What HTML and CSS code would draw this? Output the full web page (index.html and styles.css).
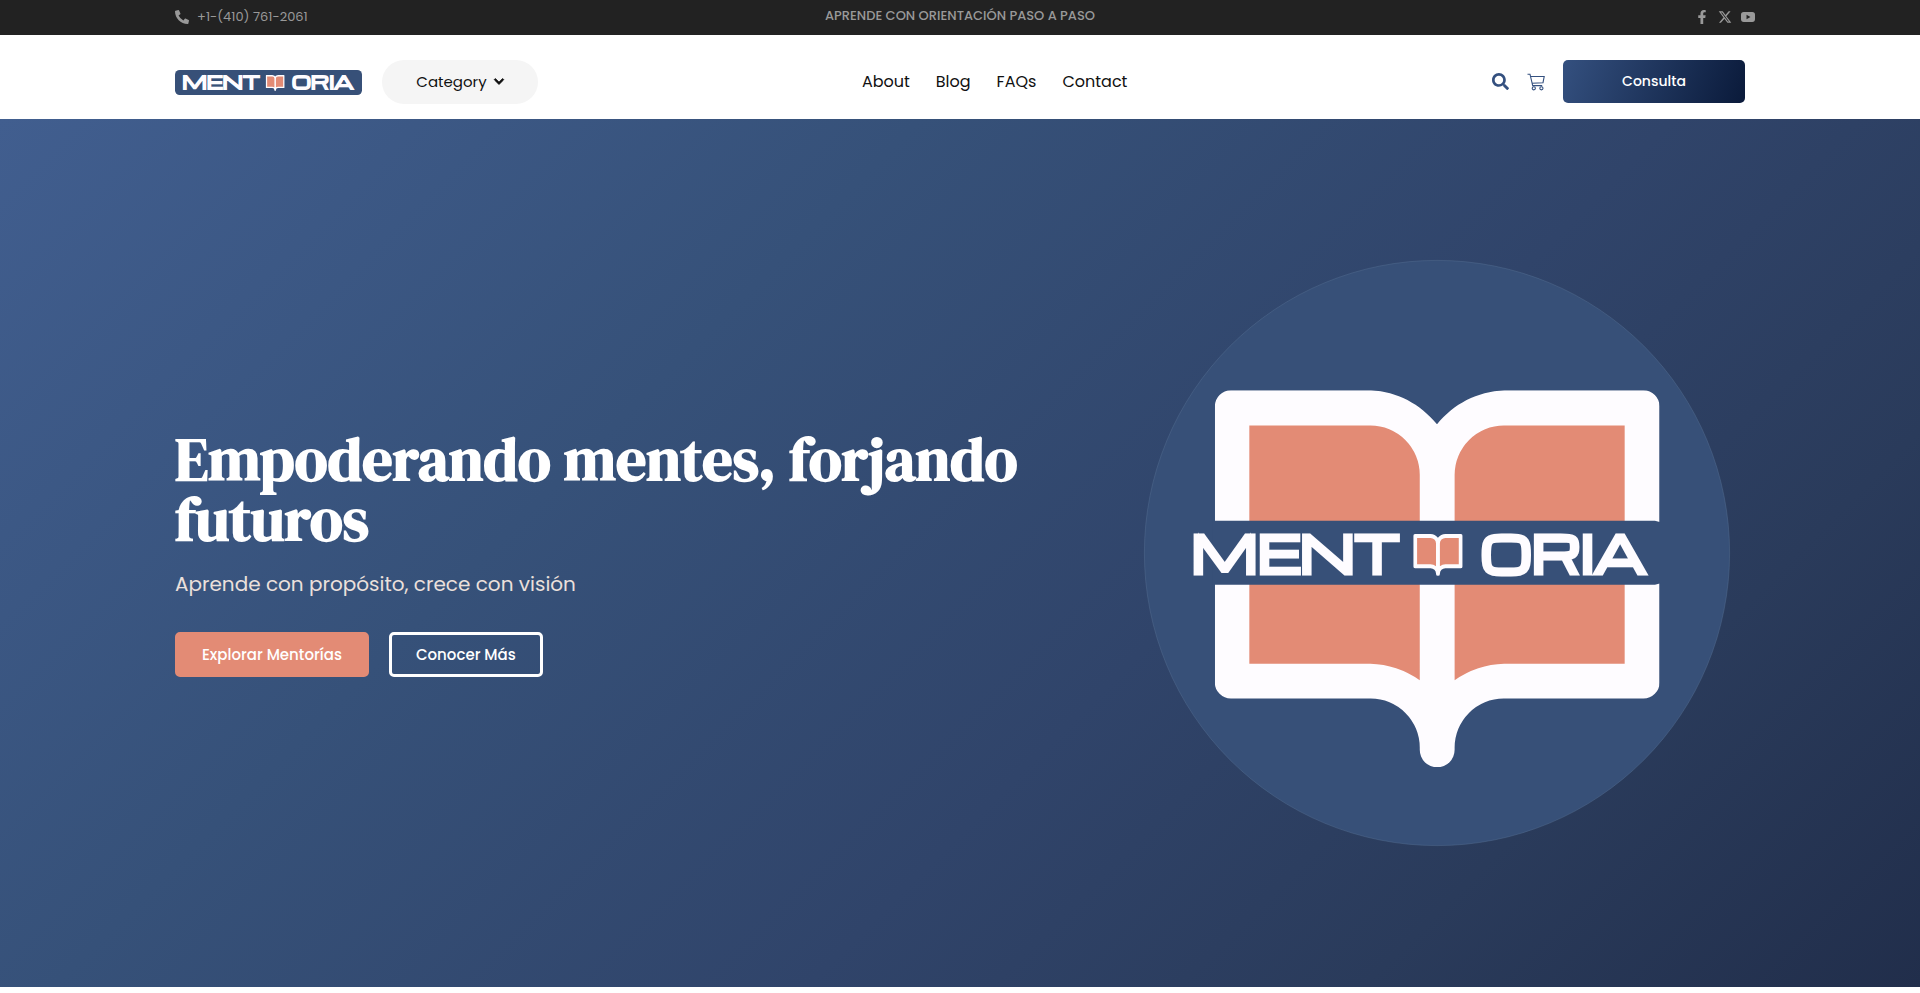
FILE: index.html
```html
<!DOCTYPE html>
<html lang="es">
	<head>
		<meta charset="utf-8">
		<meta name="viewport" content="width=device-width, initial-scale=1">
		<title>Mentooria</title>
		<link rel="stylesheet" href="styles.css">
	</head>
	<body>

		<!-- shared book drawing -->
		<svg class="defs" width="0" height="0" aria-hidden="true">
			<symbol id="book" viewBox="196 367 1161 984">
				<path fill="#fefcff" d="M238 367H604C672 371 732 402 776 456C820 402 880 371 952 367H1315A42 42 0 0 1 1357 409V1130A42 42 0 0 1 1315 1172H950A128 128 0 0 0 822 1300V1306A45 45 0 0 1 731 1306V1300A128 128 0 0 0 603 1172H238A42 42 0 0 1 196 1130V409A42 42 0 0 1 238 367Z"/>
				<path fill="#e38b75" d="M286 459H602A129 129 0 0 1 731 588V1124Q672 1083 602 1081H286ZM1266 459H951A129 129 0 0 0 822 588V1124Q881 1083 951 1081H1266Z"/>
			</symbol>
		</svg>

		<div class="topbar">
			<div class="container topbar-inner">
				<a class="phone" href="tel:+14107612061">
					<svg viewBox="0 0 512 512" width="14" height="14" aria-hidden="true"><path d="M497.39 361.8l-112-48a24 24 0 0 0-28 6.9l-49.6 60.6A370.66 370.66 0 0 1 130.6 204.11l60.6-49.6a23.94 23.94 0 0 0 6.9-28l-48-112A24.16 24.16 0 0 0 122.6.61l-104 24A24 24 0 0 0 0 48c0 256.5 207.9 464 464 464a24 24 0 0 0 23.4-18.6l24-104a24.29 24.29 0 0 0-14.01-27.6z"/></svg>
					<span>+1-(410) 761-2061</span>
				</a>
				<p class="slogan">APRENDE CON ORIENTACIÓN PASO A PASO</p>
				<div class="social">
					<a href="#" aria-label="Facebook"><svg viewBox="0 0 320 512" width="14" height="14"><path d="M279.14 288l14.22-92.66h-88.91v-60.13c0-25.35 12.42-50.06 52.24-50.06h40.42V6.26S260.43 0 225.36 0c-73.22 0-121.08 44.38-121.08 124.72v70.62H22.89V288h81.39v224h100.17V288z"/></svg></a>
					<a href="#" aria-label="X"><svg viewBox="0 0 512 512" width="14" height="14"><path d="M389.2 48h70.6L305.6 224.2 487 464H345L233.7 318.6 106.5 464H35.8L200.7 275.5 26.8 48H172.4L272.9 180.9 389.2 48zM364.4 421.8h39.1L151.1 88h-42L364.4 421.8z"/></svg></a>
					<a href="#" aria-label="YouTube"><svg viewBox="0 0 512 512" width="14" height="14"><path fill-rule="evenodd" d="M100 76H412Q512 76 512 170V342Q512 436 412 436H100Q0 436 0 342V170Q0 76 100 76ZM202 174V338L346 256Z"/></svg></a>
				</div>
			</div>
		</div>

		<header class="header">
			<div class="container header-inner">
				<div class="header-left">
					<a class="logo" href="#" aria-label="Mentooria">
						<svg viewBox="0 0 561 75" width="187" height="25">
							<rect width="561" height="75" rx="14" fill="#375078"/>
							<text class="logo-text" x="138" y="58" font-size="54" stroke-width="4">MENT</text>
							<use href="#book" x="272" y="14" width="57" height="50"/>
							<text class="logo-text" x="443" y="58" font-size="54" stroke-width="4">ORIA</text>
						</svg>
					</a>
					<button class="category" type="button">
						Category
						<svg viewBox="0 0 448 512" width="10" height="11" aria-hidden="true"><path d="M207 381L13 187a24 24 0 0 1 0-34l23-23a24 24 0 0 1 34 0l154 154 154-154a24 24 0 0 1 34 0l23 23a24 24 0 0 1 0 34L241 381a24 24 0 0 1-34 0z" stroke="#111" stroke-width="34"/></svg>
					</button>
				</div>
				<div class="header-right">
					<nav class="menu">
						<a href="#">About</a>
						<a href="#">Blog</a>
						<a href="#">FAQs</a>
						<a href="#">Contact</a>
					</nav>
					<div class="actions">
						<a class="icon" href="#" aria-label="Buscar"><svg viewBox="0 0 512 512" width="17" height="17"><path d="M505 442.7L405.3 343c-4.5-4.5-10.6-7-17-7H372c27.6-35.3 44-79.7 44-128C416 93.1 322.9 0 208 0S0 93.1 0 208s93.1 208 208 208c48.3 0 92.7-16.4 128-44v16.3c0 6.4 2.5 12.5 7 17l99.7 99.7c9.4 9.4 24.6 9.4 33.9 0l28.3-28.3c9.4-9.4 9.4-24.6.1-34zM208 336c-70.7 0-128-57.2-128-128 0-70.7 57.2-128 128-128 70.7 0 128 57.2 128 128 0 70.7-57.2 128-128 128z"/></svg></a>
						<a class="icon cart" href="#" aria-label="Carrito"><svg viewBox="0 0 18 18" width="18" height="18"><path d="M0.5 1.2H3L5.7 12.6H15.2M3.6 3.5H17.2L16 9.7L5 10.3"/><circle cx="6.8" cy="15.3" r="1.6"/><circle cx="14.4" cy="15.3" r="1.6"/></svg></a>
						<a class="consulta" href="#">Consulta</a>
					</div>
				</div>
			</div>
		</header>

		<main class="hero">
			<div class="container hero-inner">
				<div class="hero-text">
					<h1>Empoderando mentes, forjando futuros</h1>
					<p>Aprende con propósito, crece con visión</p>
					<div class="buttons">
						<a class="btn btn-fill" href="#">Explorar Mentorías</a>
						<a class="btn btn-line" href="#">Conocer Más</a>
					</div>
				</div>
				<div class="hero-image">
					<svg viewBox="11 27 1530 1530" role="img" aria-label="Mentooria">
						<circle cx="776" cy="792" r="764" fill="#375078" stroke="#5d7598" stroke-width="1"/>
						<use href="#book" x="196" y="367" width="1161" height="984"/>
						<path fill="#375078" d="M190 708H1345L1360 712V871L1345 875H190Z"/>
						<text class="logo-text" x="407" y="844" font-size="126" stroke-width="9">MENT</text>
						<use href="#book" x="714" y="742" width="129" height="110"/>
						<text class="logo-text" x="1106" y="844" font-size="126" stroke-width="9">ORIA</text>
					</svg>
				</div>
			</div>
		</main>

	</body>
</html>
```
FILE: styles.css
```css
* {
	margin: 0;
	padding: 0;
	box-sizing: border-box;
}

body {
	background-color: #fff;
	font-family: Poppins, Inter, sans-serif;
	font-size: 16px;
	color: #111;
}

a {
	color: inherit;
	text-decoration: none;
}

svg {
	display: block;
	fill: currentColor;
	overflow: visible;
}

.defs {
	position: absolute;
}

.container {
	width: 82%;
	max-width: 1570px;
	margin: 0 auto;
}

/* top bar */
.topbar {
	background-color: #222;
	color: #999;
	font-size: 13px;
}

.topbar-inner {
	display: grid;
	grid-template-columns: 1fr auto 1fr;
	align-items: center;
	height: 35px;
	padding-bottom: 1px;
}

.phone {
	display: flex;
	align-items: center;
	gap: 8px;
}

.slogan {
	font-weight: 500;
	line-height: 20px;
	padding-bottom: 2px;
}

.social {
	display: flex;
	justify-content: flex-end;
	gap: 9px;
	margin-right: -10px;
}

/* header */
.header-inner {
	display: grid;
	grid-template-columns: 7fr 9fr;
	align-items: start;
	padding: 25px 0 15px;
}

.header-left,
.header-right,
.menu,
.actions {
	display: flex;
	align-items: center;
}

.header-left {
	gap: 20px;
}

.header-right {
	justify-content: space-between;
}

.logo-text {
	font-family: Michroma, "DejaVu Sans", sans-serif;
	font-weight: bold;
	text-anchor: middle;
	fill: #fefcff;
	stroke: #fefcff;
}

.category {
	display: flex;
	align-items: center;
	justify-content: center;
	gap: 7px;
	width: 156px;
	height: 44px;
	padding-bottom: 2px;
	border: 0;
	border-radius: 22px;
	background-color: #f5f5f5;
	color: #111;
	font-family: inherit;
	font-size: 15px;
	cursor: pointer;
}

.menu {
	gap: 26px;
}

.icon {
	color: #34507f;
	margin-right: 18px;
}

.cart svg {
	fill: none;
	stroke: currentColor;
	stroke-width: 1.1;
}

.consulta {
	width: 182px;
	border-radius: 5px;
	background: linear-gradient(110deg, #34507f, #0a1a3a);
	color: #fff;
	font-size: 14px;
	font-weight: 500;
	line-height: 43px;
	text-align: center;
}

/* hero */
.hero {
	padding: 141px 0;
	background: linear-gradient(135deg, #415e8f 0%, #365179 33%, #30446a 60%, #2a3b5b 80%, #212e4b 100%);
}

.hero-inner {
	display: flex;
	align-items: center;
	justify-content: space-between;
}

.hero-text {
	flex: 1;
	color: #fff;
}

.hero-text h1 {
	font-family: "DM Serif Display", "Liberation Serif", serif;
	font-size: 60px;
	font-weight: bold;
	line-height: 60px;
	margin-bottom: 20px;
}

.hero-text p {
	color: #ebe0dc;
	font-size: 20px;
	line-height: 30px;
	margin-bottom: 33px;
}

.buttons {
	display: flex;
	gap: 20px;
}

.btn {
	border: 3px solid #fff;
	border-radius: 5px;
	padding: 0 24px;
	font-size: 15px;
	font-weight: 500;
	line-height: 39px;
	text-align: center;
}

.btn-fill {
	border-color: #e38b75;
	background-color: #e38b75;
}

.hero-image {
	width: 586px;
	max-width: 38%;
	margin: 0 15px 0 30px;
}

.hero-image svg {
	width: 100%;
}
```
